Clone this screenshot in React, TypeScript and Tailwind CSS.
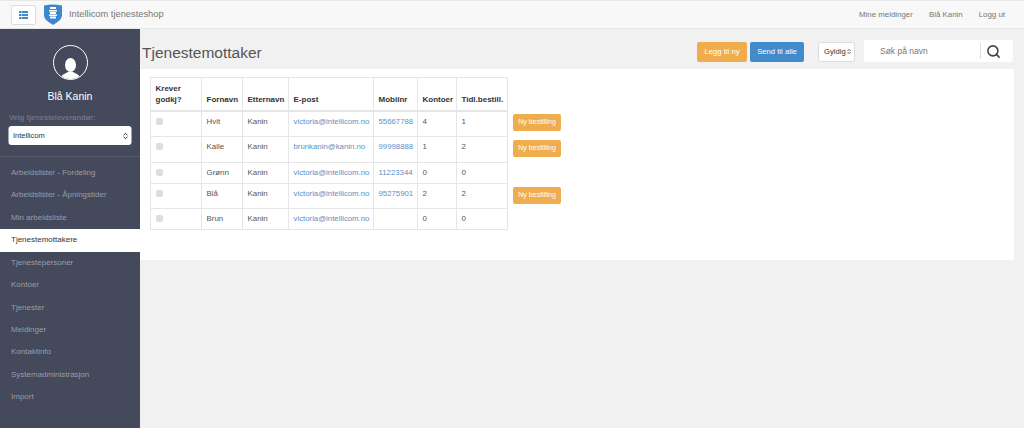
import React from 'react';
import { ChevronsUpDown, Search } from 'lucide-react';

const font = { fontFamily: '"Liberation Sans", Arial, sans-serif' };

const menu = [
  'Arbeidslister - Fordeling',
  'Arbeidslister - Åpningstider',
  'Min arbeidsliste',
  'Tjenestemottakere',
  'Tjenestepersoner',
  'Kontoer',
  'Tjenester',
  'Meldinger',
  'Kontaktinfo',
  'Systemadministrasjon',
  'Import',
];

const rows = [
  { first: 'Hvit', email: 'victoria@intellicom.no', phone: '55667788', accounts: '4', prev: '1', order: true, h: 'h-[26px]' },
  { first: 'Kalle', email: 'brunkanin@kanin.no', phone: '99998888', accounts: '1', prev: '2', order: true, h: 'h-[26px]' },
  { first: 'Grønn', email: 'victoria@intellicom.no', phone: '11223344', accounts: '0', prev: '0', order: false, h: 'h-[21px]' },
  { first: 'Blå', email: 'victoria@intellicom.no', phone: '95275901', accounts: '2', prev: '2', order: true, h: 'h-[25px]' },
  { first: 'Brun', email: 'victoria@intellicom.no', phone: '', accounts: '0', prev: '0', order: false, h: 'h-[21px]' },
];

const th = 'border border-[#e6e6e6] border-b-2 px-[4.500px] pb-[5px] align-bottom text-left text-[8px] font-bold leading-[11px] text-[#333]';
const td = 'border border-[#e6e6e6] px-[4.500px] pt-[4px] align-top text-[7.900px] leading-[11px] text-[#555]';
const link = 'border border-[#e6e6e6] px-[4.500px] pt-[4px] align-top text-[7.800px] leading-[11px] whitespace-nowrap text-[#5d8fc4]';

function ListIcon() {
  return (
    <svg width="9" height="8" viewBox="0 0 9 8" fill="#428bca">
      <rect x="0" y="0" width="2.500" height="2" />
      <rect x="3" y="0" width="6" height="2" />
      <rect x="0" y="3" width="2.500" height="2" />
      <rect x="3" y="3" width="6" height="2" />
      <rect x="0" y="6" width="2.500" height="2" />
      <rect x="3" y="6" width="6" height="2" />
    </svg>
  );
}

function Logo() {
  return (
    <svg width="18" height="21" viewBox="0 0 18 21">
      <path d="M0 1.500Q9-.5 18 1.500V11c0 4-4 7-9 10-5-3-9-6-9-10z" fill="#3d87cc" />
      <path d="M6 3h6v2H6zM5 6h8v1.500H5zM6 8h6v2H6zM5 10.500h8V12H5zM6 12.500h6v2H6z" fill="#fff" />
    </svg>
  );
}

function Avatar() {
  return (
    <div className="h-[35px] w-[35px] overflow-hidden rounded-full border border-white">
      <svg width="33" height="33" viewBox="0 0 33 33">
        <ellipse cx="16.500" cy="19" rx="5.500" ry="7" fill="#fff" />
        <path d="M7 33c0-4 3-5 7-7h5c4 2 7 3 7 7z" fill="#fff" />
      </svg>
    </div>
  );
}

export default function App() {
  return (
    <div className="flex h-[428px] w-[1024px] flex-col overflow-hidden bg-[#f1f1f1]" style={font}>
      <header className="flex h-[29px] shrink-0 items-center border-y border-[#e7e7e7] bg-[#f8f8f8] pl-[11px] pr-[19px]">
        <button className="flex h-[20px] w-[25px] items-center justify-center rounded-[2px] border border-[#ddd] bg-white">
          <ListIcon />
        </button>
        <div className="ml-[8px] flex"><Logo /></div>
        <span className="ml-[7px] text-[9.300px] text-[#777]">Intellicom tjenesteshop</span>
        <nav className="ml-auto flex gap-[16px] text-[7.900px] text-[#777]">
          <span>Mine meldinger</span>
          <span>Blå Kanin</span>
          <span>Logg ut</span>
        </nav>
      </header>

      <div className="flex min-h-0 flex-1">
        <aside className="w-[140px] shrink-0 bg-[#444a5b]">
          <div className="flex h-[128px] flex-col items-center border-b border-[#575c6b] pt-[16px]">
            <Avatar />
            <div className="mt-[10px] text-[10.500px] leading-[13px] text-white">Blå Kanin</div>
            <div className="mt-[10px] w-full pl-[9px] text-[7.500px] font-bold leading-[10px] text-[#6f7484]">Velg tjenesteleverandør:</div>
            <div className="mt-[3px] flex h-[19px] w-[123px] -translate-x-[0.500px] items-center justify-between rounded-[3px] bg-white pl-[5px] pr-[2px] text-[7.500px] text-[#333]">
              Intellicom
              <ChevronsUpDown size={8} strokeWidth={3} />
            </div>
          </div>
          <ul className="pt-[5px]">
            {menu.map(item => (
              <li
                key={item}
                className={
                  item === 'Tjenestemottakere'
                    ? 'flex h-[23px] items-center bg-white pl-[11px] text-[8px] text-[#333]'
                    : 'flex h-[22.300px] items-center pl-[11px] text-[8px] text-[#999da8]'
                }
              >
                {item}
              </li>
            ))}
          </ul>
        </aside>

        <main className="min-w-0 flex-1 pr-[10px]">
          <div className="flex h-[40px] items-center pt-[4px]">
            <h1 className="ml-[2px] mt-[4px] text-[15.500px] font-normal text-[#555]">Tjenestemottaker</h1>
            <div className="ml-auto flex items-center">
              <button className="mt-[1px] flex h-[20px] w-[50px] items-center justify-center rounded-[2px] bg-[#f0ad4e] text-[7.700px] text-white">Legg til ny</button>
              <button className="ml-[3px] mt-[1px] flex h-[20px] w-[54px] items-center justify-center rounded-[2px] bg-[#428bca] text-[7.700px] text-white">Send til alle</button>
              <div className="ml-[14px] mt-[1px] flex h-[20px] w-[37px] items-center justify-between rounded-[3px] border border-[#ddd] bg-white pl-[5px] pr-[2px] text-[7.700px] text-[#333]">
                Gyldig
                <ChevronsUpDown size={7} strokeWidth={3} />
              </div>
              <div className="ml-[9px] mr-[1px] flex h-[22px] w-[149px] items-center rounded-[2px] bg-white">
                <span className="ml-[16px] flex-1 pt-[1px] text-[8.500px] text-[#777]">Søk på navn</span>
                <div className="flex h-[16px] w-[33px] items-center border-l border-[#ddd] pl-[5px] text-[#444]">
                  <Search size={15} strokeWidth={2.500} />
                </div>
              </div>
            </div>
          </div>

          <section className="h-[191px] bg-white pl-[10px] pt-[8px]">
            <div className="flex items-start">
              <table className="w-[357px] table-fixed border-collapse">
                <colgroup>
                  <col className="w-[51px]" />
                  <col className="w-[41px]" />
                  <col className="w-[46px]" />
                  <col className="w-[85px]" />
                  <col className="w-[44px]" />
                  <col className="w-[39px]" />
                  <col className="w-[51px]" />
                </colgroup>
                <thead>
                  <tr className="h-[33px]">
                    <th className={th}>Krever godkj?</th>
                    <th className={th}>Fornavn</th>
                    <th className={th}>Etternavn</th>
                    <th className={th}>E-post</th>
                    <th className={th}>Mobilnr</th>
                    <th className={th}>Kontoer</th>
                    <th className={th + ' whitespace-nowrap'}>Tidl.bestill.</th>
                  </tr>
                </thead>
                <tbody>
                  {rows.map(row => (
                    <tr key={row.first} className={row.h}>
                      <td className={td}><div className="mt-[2px] h-[7px] w-[7px] rounded-[2px] bg-[#dddddd]" /></td>
                      <td className={td}>{row.first}</td>
                      <td className={td}>Kanin</td>
                      <td className={link}>{row.email}</td>
                      <td className={link}>{row.phone}</td>
                      <td className={td}>{row.accounts}</td>
                      <td className={td}>{row.prev}</td>
                    </tr>
                  ))}
                </tbody>
              </table>
              <div className="ml-[5px] mt-[33px] flex flex-col">
                {rows.map(row => (
                  <div key={row.first} className={row.h + ' pt-[4px]'}>
                    {row.order && (
                      <button className="flex h-[17px] w-[48px] items-center justify-center rounded-[2px] bg-[#f0ad4e] text-[7px] text-white">Ny bestilling</button>
                    )}
                  </div>
                ))}
              </div>
            </div>
          </section>
        </main>
      </div>
    </div>
  );
}
